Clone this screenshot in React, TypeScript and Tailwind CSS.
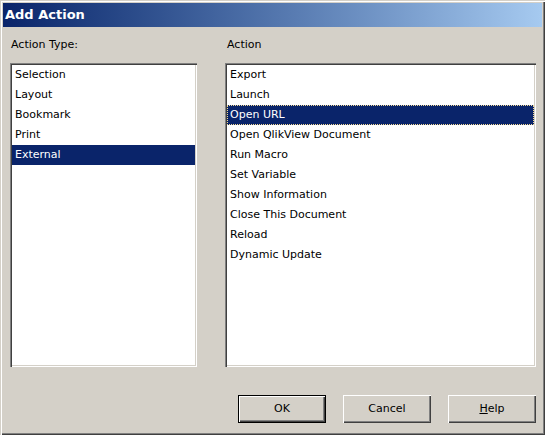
import React from 'react';

const actionTypes = ['Selection', 'Layout', 'Bookmark', 'Print', 'External'];
const actions = [
  'Export',
  'Launch',
  'Open URL',
  'Open QlikView Document',
  'Run Macro',
  'Set Variable',
  'Show Information',
  'Close This Document',
  'Reload',
  'Dynamic Update',
];

const ListBox = ({ items, selected, focused, width }: { items: string[]; selected: string; focused?: boolean; width: string }) => (
  <div
    className={`${width} h-[304px] bg-white p-[2px] shadow-[inset_1px_1px_#808080,inset_2px_2px_#404040,inset_-1px_-1px_#ffffff,inset_-2px_-2px_#d4d0c8]`}
  >
    {items.map((item) => {
      const isSel = item === selected;
      return (
        <div
          key={item}
          className={`h-[20px] leading-[20px] pl-[3px] ${
            isSel ? 'bg-[#0a246a] text-white' : 'text-black'
          } ${isSel && focused ? 'outline-1 outline-dotted outline-offset-[-1px] outline-[#f5db95]' : ''}`}
        >
          {item}
        </div>
      );
    })}
  </div>
);

const Button = ({ children, isDefault }: { children: React.ReactNode; isDefault?: boolean }) => (
  <button
    className={`w-[88px] h-[28px] bg-[#d4d0c8] text-black ${
      isDefault
        ? 'border border-black shadow-[inset_1px_1px_#ffffff,inset_-1px_-1px_#404040,inset_-2px_-2px_#808080]'
        : 'shadow-[inset_1px_1px_#ffffff,inset_-1px_-1px_#404040,inset_-2px_-2px_#808080]'
    }`}
  >
    {children}
  </button>
);

export default function App() {
  return (
    <div
      className="w-[545px] h-[435px] bg-[#d4d0c8] p-[3px] flex flex-col text-[11px] shadow-[inset_1px_1px_#d4d0c8,inset_2px_2px_#ffffff,inset_-1px_-1px_#404040,inset_-2px_-2px_#808080]"
      style={{ fontFamily: 'Tahoma, "DejaVu Sans", sans-serif' }}
    >
      <div className="h-[24px] flex items-center pl-[2px] bg-gradient-to-r from-[#0a246a] to-[#a6caf0] text-white font-bold text-[13px]">
        Add Action
      </div>

      <div className="flex pl-[7px] mt-[10px]">
        <div className="flex flex-col w-[187px]">
          <div className="h-[17px] pl-[1px] mb-[9px]">Action Type:</div>
          <ListBox items={actionTypes} selected="External" width="w-[187px]" />
        </div>
        <div className="flex flex-col w-[311px] ml-[28px]">
          <div className="h-[17px] pl-[2px] mb-[9px]">Action</div>
          <ListBox items={actions} selected="Open URL" focused width="w-[311px]" />
        </div>
      </div>

      <div className="flex justify-end gap-[17px] pr-[6px] mt-[28px]">
        <Button isDefault>OK</Button>
        <Button>Cancel</Button>
        <Button>
          <span className="underline">H</span>elp
        </Button>
      </div>
    </div>
  );
}
